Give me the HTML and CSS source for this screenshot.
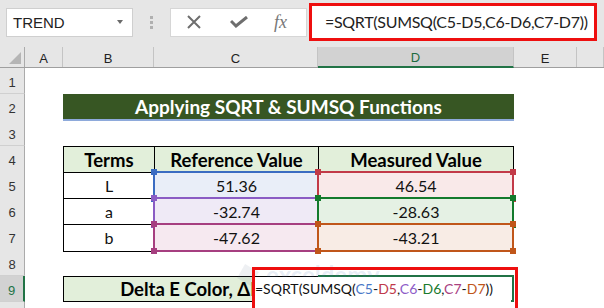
FILE: index.html
```html
<!DOCTYPE html>
<html lang="en">
<head>
    <meta charset="UTF-8">
    <title>Applying SQRT &amp; SUMSQ Functions</title>
    <link rel="stylesheet" href="styles.css">
</head>
<body>
    <div class="topbar">
        <div class="namebox">
            <span>TREND</span>
            <span class="drop"></span>
        </div>
        <div class="grip"><i></i><i></i><i></i></div>
        <div class="fxbox">
            <svg width="16" height="14" viewBox="0 0 16 14"><path d="M2 1 L14 13 M14 1 L2 13" stroke="#6e6e6e" stroke-width="2" fill="none"/></svg>
            <svg width="18" height="12" viewBox="0 0 18 12"><path d="M1 5 L6 10 L17 1" stroke="#6e6e6e" stroke-width="3" fill="none"/></svg>
            <span class="fx">fx</span>
        </div>
        <div class="formula">=SQRT(SUMSQ(C5-D5,C6-D6,C7-D7))</div>
    </div>

    <div class="sheet">
        <div class="row colhead">
            <div class="corner"><span></span></div>
            <div>A</div>
            <div>B</div>
            <div>C</div>
            <div class="sel">D</div>
            <div>E</div>
            <div></div>
        </div>

        <div class="row"><div class="rh">1</div></div>
        <div class="row">
            <div class="rh">2</div>
            <div class="title">Applying SQRT &amp; SUMSQ Functions</div>
        </div>
        <div class="row"><div class="rh">3</div></div>
        <div class="row">
            <div class="rh">4</div>
            <div class="cell head first">Terms</div>
            <div class="cell head">Reference Value</div>
            <div class="cell head last">Measured Value</div>
        </div>
        <div class="row">
            <div class="rh">5</div>
            <div class="cell first">L</div>
            <div class="cell ref blue">51.36</div>
            <div class="cell ref red last">46.54</div>
        </div>
        <div class="row">
            <div class="rh">6</div>
            <div class="cell first">a</div>
            <div class="cell ref purple">-32.74</div>
            <div class="cell ref green last">-28.63</div>
        </div>
        <div class="row">
            <div class="rh">7</div>
            <div class="cell first bottom">b</div>
            <div class="cell ref magenta bottom">-47.62</div>
            <div class="cell ref orange bottom last">-43.21</div>
        </div>
        <div class="row"><div class="rh">8</div></div>
        <div class="row row9">
            <div class="rh sel">9</div>
            <div class="cell delta">Delta E Color, &Delta;E</div>
            <div class="cell active"></div>

            <div class="watermark"><span class="logo"></span>exceldemy</div>
            <div class="editor">=SQRT(SUMSQ(<b class="c-blue">C5</b>-<b class="c-red">D5</b>,<b class="c-purple">C6</b>-<b class="c-green">D6</b>,<b class="c-magenta">C7</b>-<b class="c-orange">D7</b>))</div>
            <div class="callout"></div>
        </div>
        <div class="row"><div class="rh"></div></div>
    </div>
</body>
</html>
```

FILE: styles.css
```css
body {
    margin: 0;
    width: 604px;
    height: 308px;
    overflow: hidden;
    background: #fff;
    font-family: Lato, sans-serif;
}

/* formula bar */
.topbar {
    height: 47px;
    box-sizing: border-box;
    padding-bottom: 3px;
    background: #e6e6e6;
    display: flex;
    align-items: center;
}
.namebox {
    margin-left: 6px;
    width: 127px;
    height: 29px;
    box-sizing: border-box;
    background: #fff;
    border: 1px solid #cfcfcf;
    display: flex;
    align-items: center;
    justify-content: space-between;
    padding: 0 9px 0 6px;
    font-family: "Liberation Sans", sans-serif;
    font-size: 15px;
    color: #222;
}
.drop {
    border-left: 3.5px solid transparent;
    border-right: 3.5px solid transparent;
    border-top: 4px solid #6a6a6a;
}
.grip {
    width: 37px;
    display: flex;
    flex-direction: column;
    align-items: center;
    gap: 2px;
}
.grip i {
    width: 3px;
    height: 3px;
    background: #b0b0b0;
}
.fxbox {
    width: 137px;
    height: 29px;
    box-sizing: border-box;
    background: #fff;
    border: 1px solid #d6d6d6;
    display: flex;
    align-items: center;
    padding-left: 15px;
    gap: 28px;
}
.fx {
    font-family: "Liberation Serif", serif;
    font-style: italic;
    font-size: 18px;
    color: #777;
    margin-left: -2px;
}
.formula {
    margin-left: 2px;
    width: 288px;
    height: 38px;
    box-sizing: border-box;
    border: 3px solid #ee0f0f;
    background: #fff;
    padding-left: 13px;
    line-height: 31px;
    font-size: 16px;
    letter-spacing: -0.3px;
    color: #222;
    white-space: nowrap;
}

/* sheet grid: row header, A, B, C, D, E, F */
.row {
    display: grid;
    grid-template-columns: 25px 38px 91px 164px 196px 63px 1fr;
    height: 26px;
}
.colhead {
    height: 21px;
    background: #e6e6e6;
    border-bottom: 1px solid #9f9f9f;
    box-sizing: border-box;
    font-family: "Liberation Sans", sans-serif;
    font-size: 13px;
    color: #222;
}
.colhead div {
    border-right: 1px solid #c4c4c4;
    display: flex;
    align-items: center;
    justify-content: center;
    padding-top: 2px;
}
.colhead .sel {
    background: #d2d2d2;
    color: #1d6b40;
    border-bottom: 2px solid #217346;
    margin-bottom: -1px;
}
.colhead .corner {
    border-right: 1px solid #ababab;
    justify-content: flex-end;
    align-items: flex-end;
    padding: 0 3px 3px 0;
}
.corner span {
    width: 0;
    height: 0;
    border-left: 12px solid transparent;
    border-bottom: 12px solid #b5b5b5;
}
.rh {
    grid-column: 1;
    background: #e6e6e6;
    border-right: 1px solid #ababab;
    border-bottom: 1px solid #d0d0d0;
    font-family: "Liberation Sans", sans-serif;
    font-size: 13px;
    color: #333;
    text-align: center;
    line-height: 30px;
    overflow: hidden;
}
.rh.sel {
    background: #d2d2d2;
    color: #217346;
    border-right: 2px solid #217346;
}

.title {
    grid-column: 3 / 6;
    height: 27px;
    box-sizing: border-box;
    background: #375623;
    border-bottom: 2px solid #8eaadb;
    color: #fff;
    font-weight: bold;
    font-size: 19px;
    text-align: center;
    line-height: 25px;
}

.cell {
    box-sizing: border-box;
    border-top: 1px solid #000;
    border-left: 1px solid #000;
    font-size: 16px;
    color: #111;
    text-align: center;
    line-height: 26px;
}
.cell.first { grid-column: 3; }
.cell.last { border-right: 1px solid #000; }
.cell.bottom { border-bottom: 1px solid #000; }
.cell.head {
    background: #e2efda;
    font-weight: bold;
    font-size: 18.5px;
    color: #000;
}

/* reference highlights */
.ref {
    position: relative;
    background: var(--tint);
}
.ref::before {
    content: '';
    position: absolute;
    top: -2px;
    left: -2px;
    right: -1px;
    bottom: -1px;
    border: 2px solid var(--c);
}
.ref::after {
    content: '';
    position: absolute;
    top: -4px;
    left: -4px;
    right: -3px;
    bottom: -3px;
    background:
        linear-gradient(var(--c), var(--c)) left top / 6px 6px no-repeat,
        linear-gradient(var(--c), var(--c)) right top / 6px 6px no-repeat,
        linear-gradient(var(--c), var(--c)) left bottom / 6px 6px no-repeat,
        linear-gradient(var(--c), var(--c)) right bottom / 6px 6px no-repeat;
}
.blue { --c: #3b6cc2; --tint: #e9eef8; }
.red { --c: #c23a48; --tint: #f9e9e9; }
.purple { --c: #8a5cc4; --tint: #efeaf6; }
.green { --c: #137a2c; --tint: #e5f1e4; }
.magenta { --c: #a63f80; --tint: #f6e9f0; }
.orange { --c: #c0561a; --tint: #f8ece5; }

/* row 9 */
.row9 { position: relative; }
.cell.delta {
    grid-column: 3 / 5;
    background: #e2efda;
    border: 1px solid #000;
    font-weight: bold;
    font-size: 18.5px;
    color: #000;
    line-height: 24px;
    white-space: nowrap;
    overflow: hidden;
}
.cell.active {
    border: 2px solid #217346;
    margin-top: -1px;
}
.editor {
    position: absolute;
    left: 255px;
    top: 1px;
    width: 256px;
    height: 25px;
    background: #fff;
    font-size: 14px;
    line-height: 24px;
    color: #111;
    white-space: nowrap;
}
.editor b { font-weight: normal; }
.c-blue { color: #4a78c8; }
.c-red { color: #c0394a; }
.c-purple { color: #8e5cc8; }
.c-green { color: #1a7a2e; }
.c-magenta { color: #a8417f; }
.c-orange { color: #c0561a; }
.callout {
    position: absolute;
    left: 252px;
    top: -9px;
    width: 266px;
    height: 48px;
    box-sizing: border-box;
    border: 3px solid #ee0f0f;
}
.watermark {
    position: absolute;
    left: 240px;
    top: -16px;
    display: flex;
    align-items: center;
    gap: 10px;
    font-size: 24px;
    font-weight: bold;
    color: rgba(80, 120, 190, 0.14);
}
.watermark .logo {
    width: 16px;
    height: 16px;
    background: rgba(90, 110, 140, 0.1);
    transform: rotate(30deg);
}
```
